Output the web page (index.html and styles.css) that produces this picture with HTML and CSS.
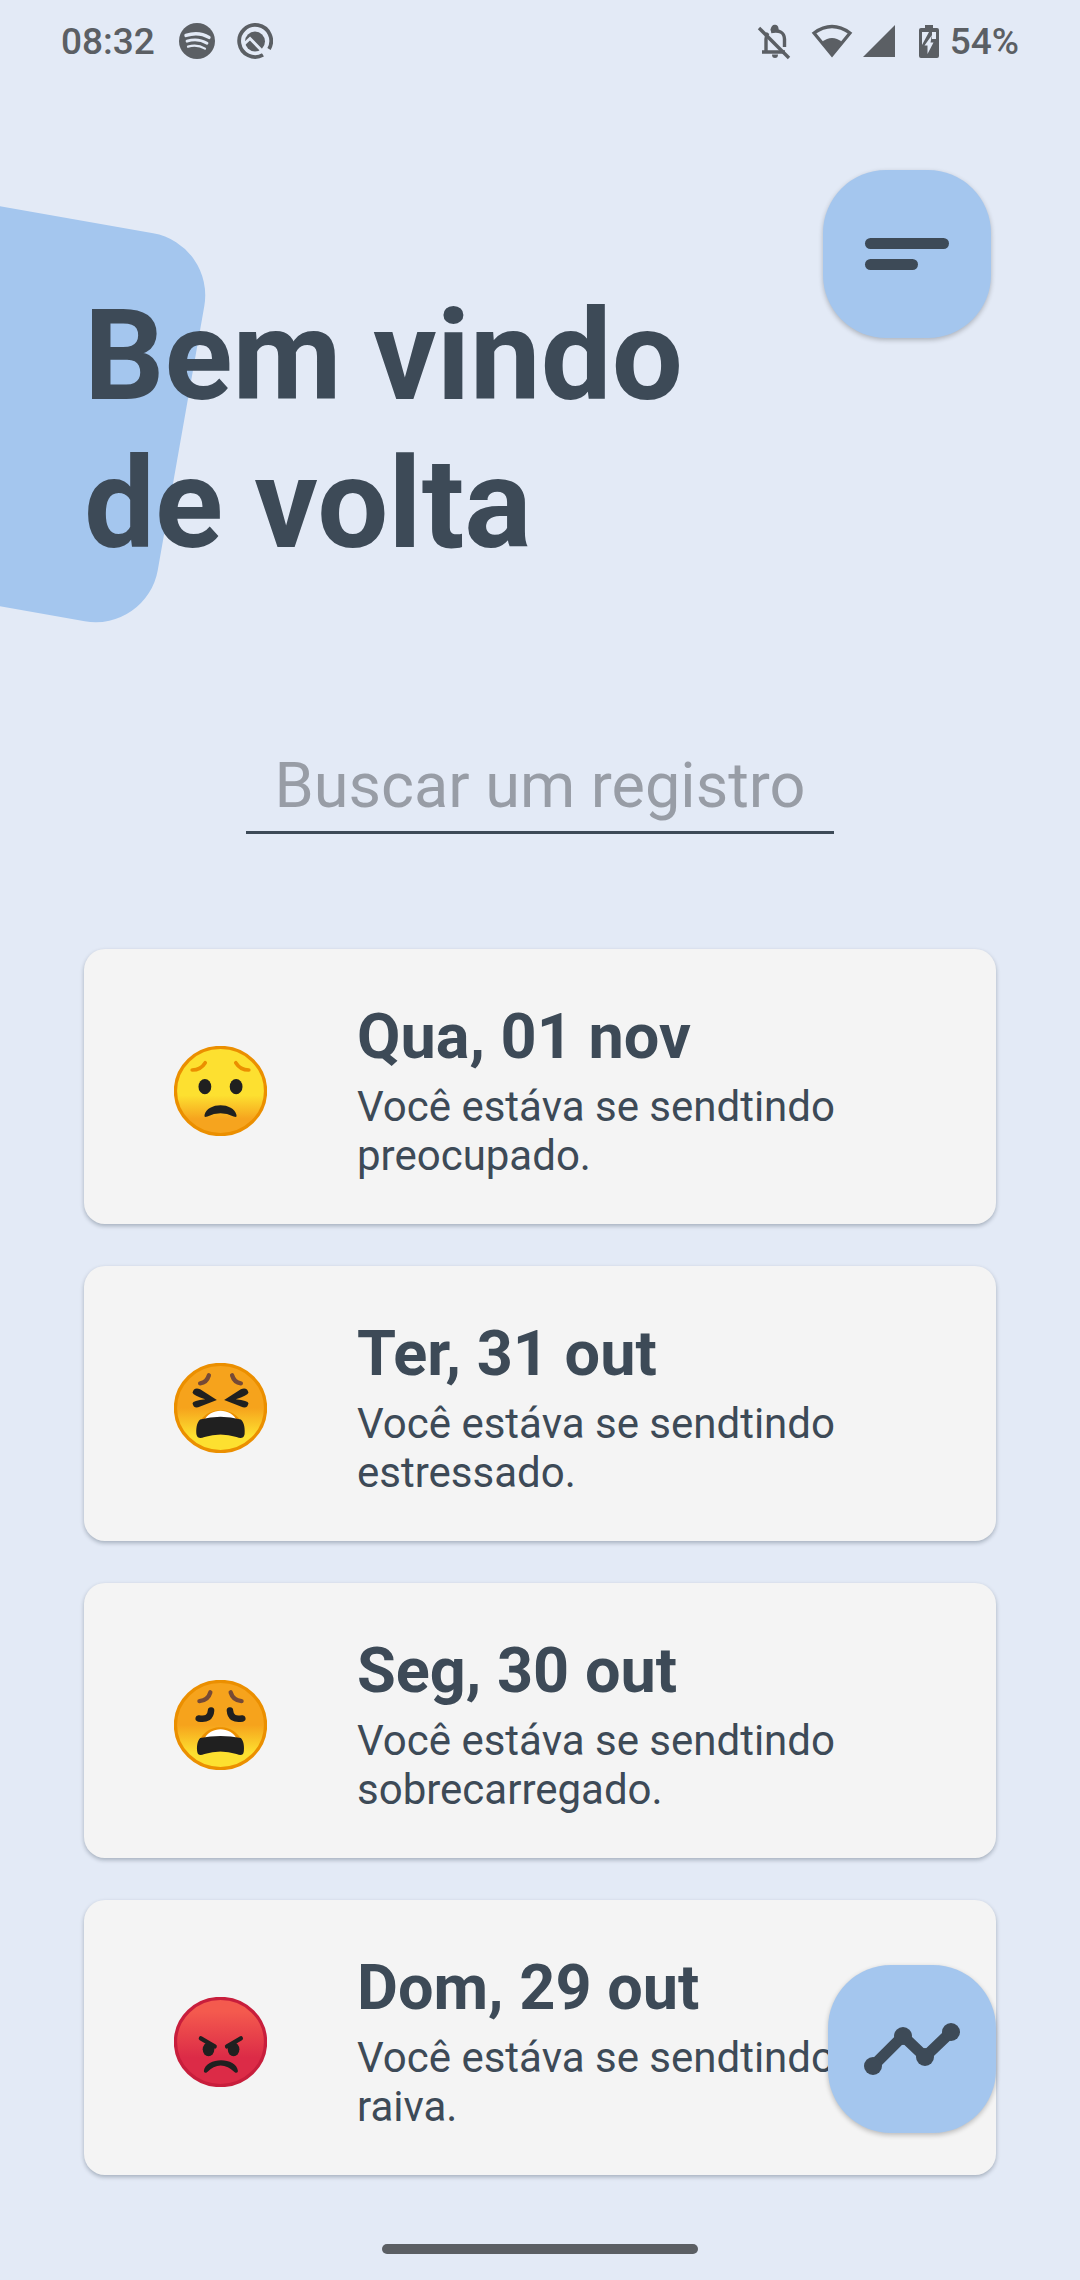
FILE: index.html
```html
<!DOCTYPE html>
<html lang="pt-BR">
<head>
<meta charset="utf-8">
<meta name="viewport" content="width=device-width, initial-scale=1">
<title>Bem vindo de volta</title>
<link rel="stylesheet" href="styles.css">
</head>
<body>
<svg width="0" height="0" class="defs" aria-hidden="true">
  <defs>
    <linearGradient id="yellow" x1="0" y1="0" x2="0" y2="1">
      <stop offset=".55" stop-color="#fde030"/><stop offset=".82" stop-color="#f6a41e"/>
    </linearGradient>
    <linearGradient id="orange" x1="0" y1="0" x2="0" y2="1">
      <stop offset=".5" stop-color="#f6a31c"/><stop offset=".82" stop-color="#fde030"/>
    </linearGradient>
    <linearGradient id="red" x1="0" y1="0" x2="0" y2="1">
      <stop offset=".15" stop-color="#f45a4e"/><stop offset=".68" stop-color="#dc2b47"/>
    </linearGradient>
  </defs>
</svg>
<div class="screen">
  <div class="status">
    <div class="status-group">
      <time class="clock">08:32</time>
      <svg class="status-icon app-icon" viewBox="0 0 36 36" aria-hidden="true">
        <circle cx="18" cy="18" r="18" fill="#5b5f64"/>
        <g fill="none" stroke="#e3eaf6" stroke-linecap="round">
          <path d="M7 12.400C15 9.800 24 10.800 30 14.400" stroke-width="3.400"/>
          <path d="M8 18.200C15 16 22.500 17 28 20.200" stroke-width="2.800"/>
          <path d="M9 23.600C15 22 21 22.600 26 25.600" stroke-width="2.200"/>
        </g>
      </svg>
      <svg class="status-icon" viewBox="0 0 36 36" aria-hidden="true">
        <path d="M26 31.900A16 16 0 1 1 32 26" fill="none" stroke="#5b5f64" stroke-width="3.800"/>
        <circle cx="18" cy="18.500" r="10" fill="#5b5f64"/>
        <path d="M6 22L13 15.500L29 32" fill="none" stroke="#e3eaf6" stroke-width="3"/>
      </svg>
    </div>
    <div class="status-group">
      <svg class="signals" viewBox="0 0 190 40" aria-hidden="true">
        <g fill="none" stroke="#5b5f64" stroke-width="3.400">
          <path d="M3 7L33 37"/>
          <path d="M6 31H29M10 31V18Q10 14.500 12 12M15 10.500Q28 8 28.500 18V26"/>
          <path d="M16 9.500Q17 5 19 5.500Q21 5 21 9.500" fill="#5b5f64"/>
        </g>
        <path d="M16 33.500H22Q22 37 19 37Q16 37 16 33.500Z" fill="#5b5f64"/>
        <path d="M58 12Q76 -1 94 12L76 34Z" fill="none" stroke="#5b5f64" stroke-width="3.200"/>
        <path d="M66 21Q76 13 86 21L76 35Z" fill="#5b5f64"/>
        <path d="M107 36L139 4V36Z" fill="#5b5f64"/>
        <path d="M169 4H177V7H181Q183 7 183 9V35Q183 37 181 37H165Q163 37 163 35V9Q163 7 165 7H169Z" fill="#5b5f64"/>
        <path d="M166 11H173L166 24ZM176 11H180V18H176ZM176 14L168.500 24.500H171.500V33L177.500 21.500H174.500Z" fill="#e3eaf6"/>
      </svg>
      <span class="battery">54%</span>
    </div>
  </div>

  <header class="header">
    <div class="blob"></div>
    <h1 class="welcome">Bem vindo<br>de volta</h1>
    <button class="square-button" type="button" aria-label="Menu">
      <svg class="button-icon" viewBox="0 0 168 168" aria-hidden="true">
        <rect x="42" y="68" width="84" height="11" rx="5.500"/>
        <rect x="42" y="89" width="53" height="11" rx="5.500"/>
      </svg>
    </button>
  </header>

  <form class="search">
    <input class="search-input" type="text" aria-label="Buscar um registro" placeholder="Buscar um registro">
  </form>

  <main class="records">
    <article class="card">
      <svg class="face" viewBox="0 0 128 124" preserveAspectRatio="none" aria-hidden="true">
        <ellipse cx="64" cy="62" rx="62" ry="60" fill="url(#yellow)" stroke="#eb8f00" stroke-width="4.500"/>
        <path d="M25 33Q37 33 43 23M103 33Q91 33 85 23" fill="none" stroke="#eb8f00" stroke-width="5" stroke-linecap="round"/>
        <ellipse cx="42.500" cy="56" rx="8.800" ry="10.500" fill="#202020"/><ellipse cx="85.500" cy="56" rx="8.800" ry="10.500" fill="#202020"/>
        <path d="M42 95C46 77 82 77 86 95Q87 99 82 97Q64 88 46 97Q41 99 42 95Z" fill="#202020"/>
      </svg>
      <div class="card-text">
        <h2 class="date">Qua, 01 nov</h2>
        <p class="mood">Você estáva se sendtindo preocupado.</p>
      </div>
    </article>
    <article class="card">
      <svg class="face" viewBox="0 0 128 124" preserveAspectRatio="none" aria-hidden="true">
        <ellipse cx="64" cy="62" rx="62" ry="60" fill="url(#orange)" stroke="#eb8f00" stroke-width="4.500"/>
        <path d="M36 28Q45 27 48 17M92 28Q83 27 80 17" fill="none" stroke="#764a36" stroke-width="6" stroke-linecap="round"/>
        <path d="M25.500 41Q27 33 36 36L59 51L36 60Q27 64 25.500 55.500Q26 52 43 50Q27 45 25.500 41Z" fill="#202020"/>
        <path d="M102.500 41Q101 33 92 36L69 51L92 60Q101 64 102.500 55.500Q102 52 85 50Q101 45 102.500 41Z" fill="#202020"/>
        <path d="M31 98C32 54 96 54 97 98Z" fill="#eb8f00"/>
        <path d="M41 80C50 61 78 61 87 80Z" fill="#fff"/>
        <path d="M36 78Q64 70 92 78C97 82 98 92 97 99Q95 106 86 102Q64 95 42 102Q33 106 31 99C30 92 31 82 36 78Z" fill="#202020"/>
      </svg>
      <div class="card-text">
        <h2 class="date">Ter, 31 out</h2>
        <p class="mood">Você estáva se sendtindo estressado.</p>
      </div>
    </article>
    <article class="card">
      <svg class="face" viewBox="0 0 128 124" preserveAspectRatio="none" aria-hidden="true">
        <ellipse cx="64" cy="62" rx="62" ry="60" fill="url(#orange)" stroke="#eb8f00" stroke-width="4.500"/>
        <path d="M35 29Q47 28 50 17M93 29Q81 28 78 17" fill="none" stroke="#764a36" stroke-width="6" stroke-linecap="round"/>
        <path d="M34 53Q50 56 51 42M94 53Q78 56 77 42" fill="none" stroke="#202020" stroke-width="9" stroke-linecap="round"/>
        <path d="M32 98C33 54 95 54 96 98Z" fill="#eb8f00"/>
        <path d="M41 82C50 63 78 63 87 82Z" fill="#fff"/>
        <path d="M36 80Q64 74 92 80C96 84 97 92 96 99Q95 106 86 102Q64 95 42 102Q33 106 32 99C31 92 32 84 36 80Z" fill="#202020"/>
      </svg>
      <div class="card-text">
        <h2 class="date">Seg, 30 out</h2>
        <p class="mood">Você estáva se sendtindo sobrecarregado.</p>
      </div>
    </article>
    <article class="card">
      <svg class="face" viewBox="0 0 128 124" preserveAspectRatio="none" aria-hidden="true">
        <ellipse cx="64" cy="62" rx="62" ry="60" fill="url(#red)" stroke="#c81e3c" stroke-width="4.500"/>
        <ellipse cx="47.500" cy="72" rx="8" ry="9.500" fill="#202020"/><ellipse cx="82" cy="72" rx="8" ry="9.500" fill="#202020"/>
        <path d="M37 57Q47 63 56 68M92 57Q82 63 73 68" fill="none" stroke="#202020" stroke-width="6" stroke-linecap="round"/>
        <path d="M41 102C44 82 86 82 88 102Q88 105 84 104Q64 85 45 104Q41 105 41 102Z" fill="#202020"/>
      </svg>
      <div class="card-text">
        <h2 class="date">Dom, 29 out</h2>
        <p class="mood">Você estáva se sendtindo raiva.</p>
      </div>
    </article>
  </main>

  <button class="square-button floating" type="button" aria-label="Estatísticas">
    <svg class="button-icon" viewBox="0 0 168 168" aria-hidden="true">
      <path d="M45 101L75 71L97 92L123 67" fill="none" stroke="#3d4a57" stroke-width="11"/>
      <circle cx="45" cy="101" r="9"/><circle cx="75" cy="71" r="9"/><circle cx="97" cy="92" r="9"/><circle cx="123" cy="67" r="9"/>
    </svg>
  </button>
  <footer class="nav"><span class="nav-handle"></span></footer>
</div>
</body>
</html>
```
FILE: styles.css
```css
* {
  box-sizing: border-box;
}

body {
  margin: 0;
  background: #e3eaf6;
  color: #3d4a57;
  font-family: Roboto, "Noto Sans", sans-serif;
}

h1,
h2,
p {
  margin: 0;
}

.defs {
  position: absolute;
}

.screen {
  position: relative;
  display: flex;
  flex-direction: column;
  min-height: 100vh;
  overflow: hidden;
}

/* Status bar */
.status {
  display: flex;
  justify-content: space-between;
  align-items: center;
  height: 80px;
  padding: 2px 61px 0;
  color: #5b5f64;
  font-size: 37px;
  font-weight: 500;
}

.status-group {
  display: flex;
  align-items: center;
}

.clock {
  margin-right: 24px;
}

.status-icon {
  width: 36px;
  height: 36px;
}

.app-icon {
  margin-right: 22px;
}

.signals {
  width: 190px;
  height: 40px;
  margin-right: 4px;
}

/* Header */
.header {
  position: relative;
  display: flex;
  justify-content: space-between;
  align-items: flex-start;
  padding: 90px 89px 0 84px;
}

.blob {
  position: absolute;
  top: 127px;
  left: -210px;
  width: 394px;
  height: 394px;
  border-radius: 63px;
  background: #a4c6ee;
  transform: rotate(10deg);
}

.welcome {
  position: relative;
  padding-top: 112px;
  font-size: 126px;
  font-weight: 700;
  line-height: 148px;
}

.square-button {
  width: 168px;
  height: 168px;
  padding: 0;
  border: 0;
  border-radius: 63px;
  background: #a4c6ee;
  box-shadow: 0 2px 5px rgba(0, 0, 0, 0.24);
}

.button-icon {
  display: block;
  width: 100%;
  height: 100%;
  fill: #3d4a57;
}

/* Search */
.search {
  display: flex;
  justify-content: center;
  padding-top: 154px;
}

.search-input {
  width: 588px;
  height: 102px;
  padding: 8px 0 0;
  border: 0;
  border-bottom: 3px solid #3d4a57;
  border-radius: 0;
  background: transparent;
  color: #3d4a57;
  font-family: inherit;
  font-size: 63px;
  text-align: center;
}

.search-input::placeholder {
  color: #989da6;
  opacity: 1;
}

/* Records */
.records {
  display: flex;
  flex-direction: column;
  gap: 42px;
  padding: 115px 84px 0;
}

.card {
  display: flex;
  align-items: center;
  height: 275px;
  padding: 0 84px 0 90px;
  border-radius: 21px;
  background: #f4f4f4;
  box-shadow: 0 2px 4px rgba(0, 20, 40, 0.28);
}

.face {
  flex: none;
  width: 93px;
  height: 90px;
  margin: 8px 90px 0 0;
}

.card-text {
  flex: 1;
  padding-top: 6px;
}

.date {
  margin-bottom: 8px;
  font-size: 63px;
  font-weight: 700;
  line-height: 74px;
}

.mood {
  font-size: 42px;
  line-height: 49px;
}

.floating {
  position: absolute;
  right: 84px;
  bottom: 147px;
}

.nav {
  display: flex;
  justify-content: center;
  margin-top: auto;
  padding: 42px 0 26px;
}

.nav-handle {
  width: 316px;
  height: 10px;
  border-radius: 5px;
  background: #5b5f64;
}
```
